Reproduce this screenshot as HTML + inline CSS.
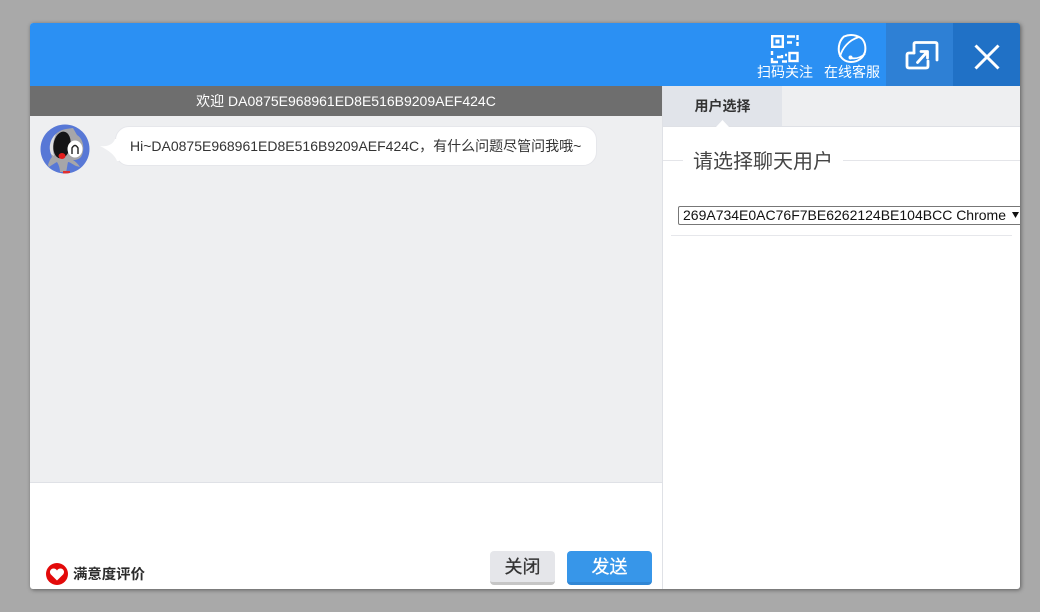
<!DOCTYPE html>
<html><head><meta charset="utf-8"><style>
html,body{margin:0;padding:0;width:1040px;height:612px;overflow:hidden;background:#a9a9a9;font-family:"Liberation Sans","Noto Sans CJK SC",sans-serif}
div,span,svg{position:absolute;box-sizing:border-box;white-space:nowrap}
#p{left:30px;top:23px;width:990px;height:566px;background:#fff;border-radius:3px;overflow:hidden}
#shadow{left:30px;top:23px;width:990px;height:566px;border-radius:3px;box-shadow:1px 1px 4px rgba(0,0,0,.45)}
.t{color:#fff;font-size:14px;line-height:16px;text-align:center}
</style></head><body>
<div id="shadow"></div>
<div id="p">
<div style="left:0;top:0;width:990px;height:63px;background:#2b90f3"></div>
<div style="left:856px;top:0;width:67px;height:63px;background:#2e80d5"></div>
<div style="left:923px;top:0;width:67px;height:63px;background:#2071c6"></div>

<svg style="left:740px;top:11px" width="30" height="30" viewBox="0 0 30 30" fill="none" stroke="#fff" stroke-width="2.400">
<rect x="2.200" y="2.200" width="10.600" height="10.600"/><rect x="5.500" y="5.500" width="4" height="4" fill="#fff" stroke="none"/>
<path d="M17 2.500H25M27.500 1V6M17 8.500H22M27.500 8V12"/>
<path d="M2 17V21M2 24V28H8M12 21V23H7M12 27.500H17M15 21H17"/>
<rect x="19.500" y="19" width="8" height="8"/>
</svg>
<svg style="left:806px;top:10px" width="32" height="32" viewBox="0 0 32 32" fill="none" stroke="#fff" stroke-width="2">
<path d="M8 3.500C14 1 20 2 25 5C29 8 30 14 29 19C27 25 22 29 15 29C9 29 4 25 3 19C2 13 4 7 8 3.500Z"/>
<path d="M4 24C6 15 13 7 23 4" stroke-width="1.700"/><path d="M15 25c4 1 9 0 14-4" stroke-width="1.700"/><circle cx="14.500" cy="24.500" r="2" fill="#fff" stroke="none"/>
</svg>
<div class="t" style="left:722px;top:41px;width:66px">扫码关注</div>
<div class="t" style="left:788px;top:41px;width:68px">在线客服</div>

<svg style="left:870px;top:13px" width="44" height="40" viewBox="0 0 44 40" fill="none" stroke="#fff" stroke-width="2.800" stroke-linejoin="round" stroke-linecap="round">
<path d="M14 17H9Q7 17 7 19V30Q7 32 9 32H26Q28 32 28 30V25"/>
<path d="M14 17V8Q14 6.500 16 6.500H35Q37 6.500 37 8V24"/>
<path d="M17.500 26.500L27 16"/><path d="M21 15.500H27.500V22"/>
</svg>
<svg style="left:944px;top:21px" width="26" height="26" viewBox="0 0 26 26" fill="none" stroke="#fff" stroke-width="3">
<path d="M1.500 1.500L24.500 24.500M24.500 1.500L1.500 24.500"/>
</svg>

<div style="left:0;top:63px;width:632px;height:30px;background:#6e6e6e;color:#fff;font-size:14px;line-height:30px;text-align:center">欢迎 DA0875E968961ED8E516B9209AEF424C</div>
<div style="left:0;top:93px;width:632px;height:366px;background:#eeeff1"></div>
<div style="left:0;top:459px;width:632px;height:1px;background:#dfe1e6"></div>
<div style="left:632px;top:63px;width:1px;height:503px;background:#dfe1e6"></div>

<svg style="left:10px;top:101px" width="50" height="50" viewBox="0 0 50 50">
<defs><clipPath id="c"><circle cx="25" cy="25" r="24.500"/></clipPath></defs>
<g clip-path="url(#c)"><rect width="50" height="50" fill="#5878d6"/>
<path d="M11 30C8 18 14 7 26 5L33 4L37 11C44 15 45 27 41 33C38 36 35 36 33 36C36 38 38 40 40 43L36 42C32 40 30 38 28 38C27 42 27 45 26 48H20C20 45 19 41 17 38C15 39 12 41 9 43L8 41C9 38 10 35 12 33Z" fill="#a6a6a9"/>
<path d="M11 30C8 22 11 14 16 10C13 16 12 24 14 32Z" fill="#e0e0e3"/>
<ellipse cx="22" cy="21" rx="8.500" ry="13.500" fill="#141416" transform="rotate(10 22 21)"/>
<ellipse cx="35" cy="25" rx="7.500" ry="8.500" fill="#fff"/><path d="M32 30V24Q35 19 38 24V30" fill="none" stroke="#222" stroke-width="1.400"/>
<ellipse cx="22" cy="32" rx="3.500" ry="3" fill="#e31c1c"/>
<rect x="23" y="47" width="7" height="3" fill="#e03030"/></g>
</svg>

<div style="left:85px;top:103px;width:482px;height:40px;background:#fff;border:1px solid #e6e7eb;border-radius:14px;color:#333;font-size:14px;line-height:38px;padding-left:14px">Hi~DA0875E968961ED8E516B9209AEF424C，有什么问题尽管问我哦~</div>
<svg style="left:70px;top:110px" width="20" height="30" viewBox="0 0 20 30"><path d="M0 13C6 14 13 12 15 6L19 6V28L17 28C15 22 8 17 0 13Z" fill="#fff"/></svg>

<svg style="left:16px;top:540px" width="22" height="22" viewBox="0 0 22 22">
<circle cx="11" cy="11" r="11" fill="#e30a0a"/><path d="M11 17.500L4.700 11.200C2.800 8.500 4.800 5.500 7.500 5.500C9 5.500 10.300 6.300 11 7.500C11.700 6.300 13 5.500 14.500 5.500C17.200 5.500 19.200 8.500 17.300 11.200Z" fill="#fff"/>
</svg>
<div style="left:43px;top:542px;font-size:14.400px;line-height:20px;color:#2b2b2b;font-weight:bold">满意度评价</div>

<div style="left:460px;top:528px;width:65px;height:34px;background:#e5e6ea;border-bottom:3px solid #c6c6c6;border-radius:4px;color:#333;font-size:18px;line-height:32px;text-align:center;-webkit-text-stroke:.3px #333">关闭</div>
<div style="left:537px;top:528px;width:85px;height:34px;background:#3796e9;border-bottom:3px solid #3187d5;border-radius:4px;color:#fff;font-size:18px;line-height:32px;text-align:center;-webkit-text-stroke:.3px #fff">发送</div>

<div style="left:633px;top:63px;width:357px;height:41px;background:#eeeff1;border-bottom:1px solid #dfe1e6"></div>
<div style="left:633px;top:63px;width:119px;height:40px;background:#e1e4ea;color:#333;font-size:14px;font-weight:bold;line-height:41px;text-align:center">用户选择</div>
<svg style="left:686px;top:96px" width="13" height="8" viewBox="0 0 13 8"><path d="M6.500 1L13 8H0Z" fill="#fff"/></svg>

<div style="left:633px;top:137px;width:357px;height:1px;background:#e4e5e9"></div>
<div style="left:653px;top:123px;width:160px;height:30px;background:#fff;color:#444;font-size:20px;line-height:33px;text-align:center">请选择聊天用户</div>

<div style="left:648px;top:183px;width:380px;height:19px;background:#fff;border:1px solid #777;border-radius:2px;color:#111;font-size:14px;line-height:16px;padding-left:4px">269A734E0AC76F7BE6262124BE104BCC Chrome</div>
<svg style="left:982px;top:189px" width="7" height="6" viewBox="0 0 7 6"><path d="M0 0H7L3.500 6Z" fill="#111"/></svg>
<div style="left:641px;top:212px;width:341px;height:1px;background:#e6e7eb"></div>
</div>
</body></html>
